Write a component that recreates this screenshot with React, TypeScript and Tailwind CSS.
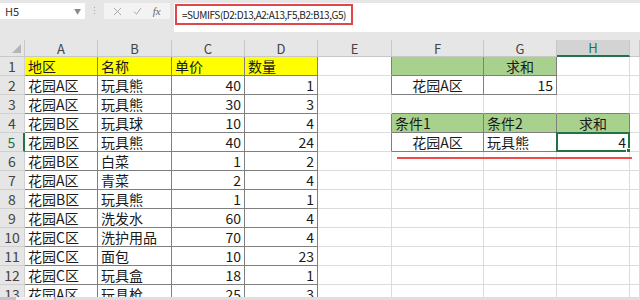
import React from "react";

type Cell = { v?: string; align?: "l" | "c" | "r"; bg?: string };

const colNames = ["A", "B", "C", "D", "E", "F", "G", "H", ""];

const regions = ["花园A区", "花园A区", "花园B区", "花园B区", "花园B区", "花园A区", "花园B区", "花园A区", "花园C区", "花园C区", "花园C区", "花园A区"];
const names = ["玩具熊", "玩具熊", "玩具球", "玩具熊", "白菜", "青菜", "玩具熊", "洗发水", "洗护用品", "面包", "玩具盒", "玩具枪"];
const prices = ["40", "30", "10", "40", "1", "2", "1", "60", "70", "10", "18", "25"];
const qty = ["1", "3", "4", "24", "2", "4", "1", "4", "4", "23", "1", "3"];

// rows 1..13, columns A..I (index 1..9)
const buildRows = (): Cell[][] => {
  const rows: Cell[][] = [];
  for (let r = 1; r <= 13; r++) {
    const row: Cell[] = Array.from({ length: 10 }, () => ({}));
    if (r === 1) {
      row[1] = { v: "地区", bg: "yellow" };
      row[2] = { v: "名称", bg: "yellow" };
      row[3] = { v: "单价", bg: "yellow" };
      row[4] = { v: "数量", bg: "yellow" };
      row[6] = { bg: "green" };
      row[7] = { v: "求和", align: "c", bg: "green" };
    } else {
      row[1] = { v: regions[r - 2] };
      row[2] = { v: names[r - 2] };
      row[3] = { v: prices[r - 2], align: "r" };
      row[4] = { v: qty[r - 2], align: "r" };
    }
    if (r === 2) {
      row[6] = { v: "花园A区", align: "c" };
      row[7] = { v: "15", align: "r" };
    }
    if (r === 4) {
      row[6] = { v: "条件1", bg: "green" };
      row[7] = { v: "条件2", bg: "green" };
      row[8] = { v: "求和", align: "c", bg: "green" };
    }
    if (r === 5) {
      row[6] = { v: "花园A区", align: "c" };
      row[7] = { v: "玩具熊" };
      row[8] = { v: "4", align: "r" };
    }
    rows.push(row);
  }
  return rows;
};

const boxed = (r: number, c: number) =>
  (r >= 1 && r <= 13 && c >= 1 && c <= 4) ||
  (r >= 1 && r <= 2 && c >= 6 && c <= 7) ||
  (r >= 4 && r <= 5 && c >= 6 && c <= 8);

export default function App() {
  const rows = buildRows();

  return (
    <div className="w-[640px] h-[300px] bg-[#e6e6e6] flex flex-col overflow-hidden text-[#1a1a1a] font-['Noto_Sans_CJK_SC','Noto_Sans',sans-serif]">
      {/* formula bar */}
      <div className="h-[40px] flex items-start pt-[3px] shrink-0">
        <div className="w-[85px] h-[16px] bg-white flex items-center justify-between pl-[5px] pr-[4px] text-[11px] text-[#333]">
          <span>H5</span>
          <span className="text-[7px] text-[#888]">▼</span>
        </div>
        <div className="w-[19px] flex flex-col items-center gap-[2px] pt-[4px]">
          <span className="w-[1px] h-[1px] bg-[#aaa]" />
          <span className="w-[1px] h-[1px] bg-[#aaa]" />
          <span className="w-[1px] h-[1px] bg-[#aaa]" />
        </div>
        <div className="w-[66px] h-[16px] bg-[#f3f3f3] flex items-center justify-around px-[4px] text-[#9a9a9a]">
          <svg width="9" height="9" viewBox="0 0 10 10">
            <path d="M1 1 L9 9 M9 1 L1 9" stroke="#a0a0a0" strokeWidth="1" />
          </svg>
          <svg width="9" height="9" viewBox="0 0 10 10">
            <path d="M1 5 L4 8 L9 1" stroke="#a0a0a0" strokeWidth="1" fill="none" />
          </svg>
          <span className="text-[11px] italic font-['Liberation_Serif',serif] text-[#666]">fx</span>
        </div>
        <div className="ml-[4px] flex-1 h-[29px] bg-white pt-[1px] pl-[1px]">
          <div className="w-[178px] h-[21px] border-2 border-[#e0474c] flex items-center pl-[5px] text-[10px] tracking-[-0.45px] whitespace-nowrap text-[#222]">
            =SUMIFS(D2:D13,A2:A13,F5,B2:B13,G5)
          </div>
        </div>
      </div>

      {/* sheet */}
      <div className="relative flex-1 overflow-hidden bg-white">
        <div className="grid grid-cols-[25px_73px_74px_73px_73px_74px_92px_73px_73px_10px]">
          {/* column headers */}
          <div className="h-[17px] bg-[#e6e6e6] border-r border-b border-[#c8c8c8] relative">
            <div className="absolute right-[3px] bottom-[3px] w-0 h-0 border-l-[9px] border-l-transparent border-b-[9px] border-b-[#b5b5b5]" />
          </div>
          {colNames.map((n, i) =>
            n === "H" ? (
              <div
                key={i}
                className="h-[17px] bg-[#d3d3d3] border-r border-[#c8c8c8] border-b-2 border-b-[#217346] flex items-center justify-center text-[13px] leading-none text-[#217346]"
              >
                {n}
              </div>
            ) : (
              <div
                key={i}
                className="h-[17px] bg-[#e6e6e6] border-r border-b border-[#c8c8c8] flex items-center justify-center text-[13px] leading-none text-[#444]"
              >
                {n}
              </div>
            ),
          )}

          {rows.map((row, ri) => {
            const r = ri + 1;
            return (
              <React.Fragment key={r}>
                <div
                  className={
                    r === 5
                      ? "h-[19px] bg-[#e6e6e6] border-b border-[#d0d0d0] border-r-2 border-r-[#217346] flex items-center justify-center text-[14px] leading-none text-[#217346]"
                      : "h-[19px] bg-[#e6e6e6] border-b border-r border-[#d0d0d0] flex items-center justify-center text-[14px] leading-none text-[#444]"
                  }
                >
                  {r}
                </div>
                {row.slice(1).map((cell, ci) => {
                  const c = ci + 1;
                  const darkR = boxed(r, c) || boxed(r, c + 1);
                  const darkB = boxed(r, c) || boxed(r + 1, c);
                  const bg =
                    cell.bg === "yellow"
                      ? "bg-[#ffff00]"
                      : cell.bg === "green"
                        ? "bg-[#a9d18e]"
                        : "bg-white";
                  const align =
                    cell.align === "r"
                      ? "justify-end pr-[3px]"
                      : cell.align === "c"
                        ? "justify-center"
                        : "justify-start pl-[3px]";
                  return (
                    <div
                      key={c}
                      className={[
                        "relative h-[19px] flex items-center text-[14px] leading-none whitespace-nowrap",
                        bg,
                        align,
                        darkR ? "border-r border-r-[#7f7f7f]" : "border-r border-r-[#dcdcdc]",
                        darkB ? "border-b border-b-[#7f7f7f]" : "border-b border-b-[#dcdcdc]",
                      ].join(" ")}
                    >
                      {cell.v}
                      {r === 5 && c === 8 && (
                        <div className="absolute -left-px -top-px -right-px -bottom-px border-2 border-[#217346]">
                          <div className="absolute -right-[3px] -bottom-[3px] w-[5px] h-[5px] bg-[#217346] border border-white" />
                        </div>
                      )}
                    </div>
                  );
                })}
              </React.Fragment>
            );
          })}
        </div>

        {/* red underline drawn on the screenshot */}
        <div className="absolute left-[397px] top-[117px] w-[235px] h-[2px] bg-[#f04a4a]" />

        {/* sheet tab strip */}
        <div className="absolute left-0 right-0 bottom-0 h-[3px] bg-[#d4d4d4] flex">
          <div className="w-[16px] bg-[#c4c4c4]" />
          <div className="w-[38px] bg-[#f0f0f0]" />
          <div className="w-[2px] bg-[#bdbdbd]" />
          <div className="flex-1 bg-[#dedede]" />
        </div>
      </div>
    </div>
  );
}
